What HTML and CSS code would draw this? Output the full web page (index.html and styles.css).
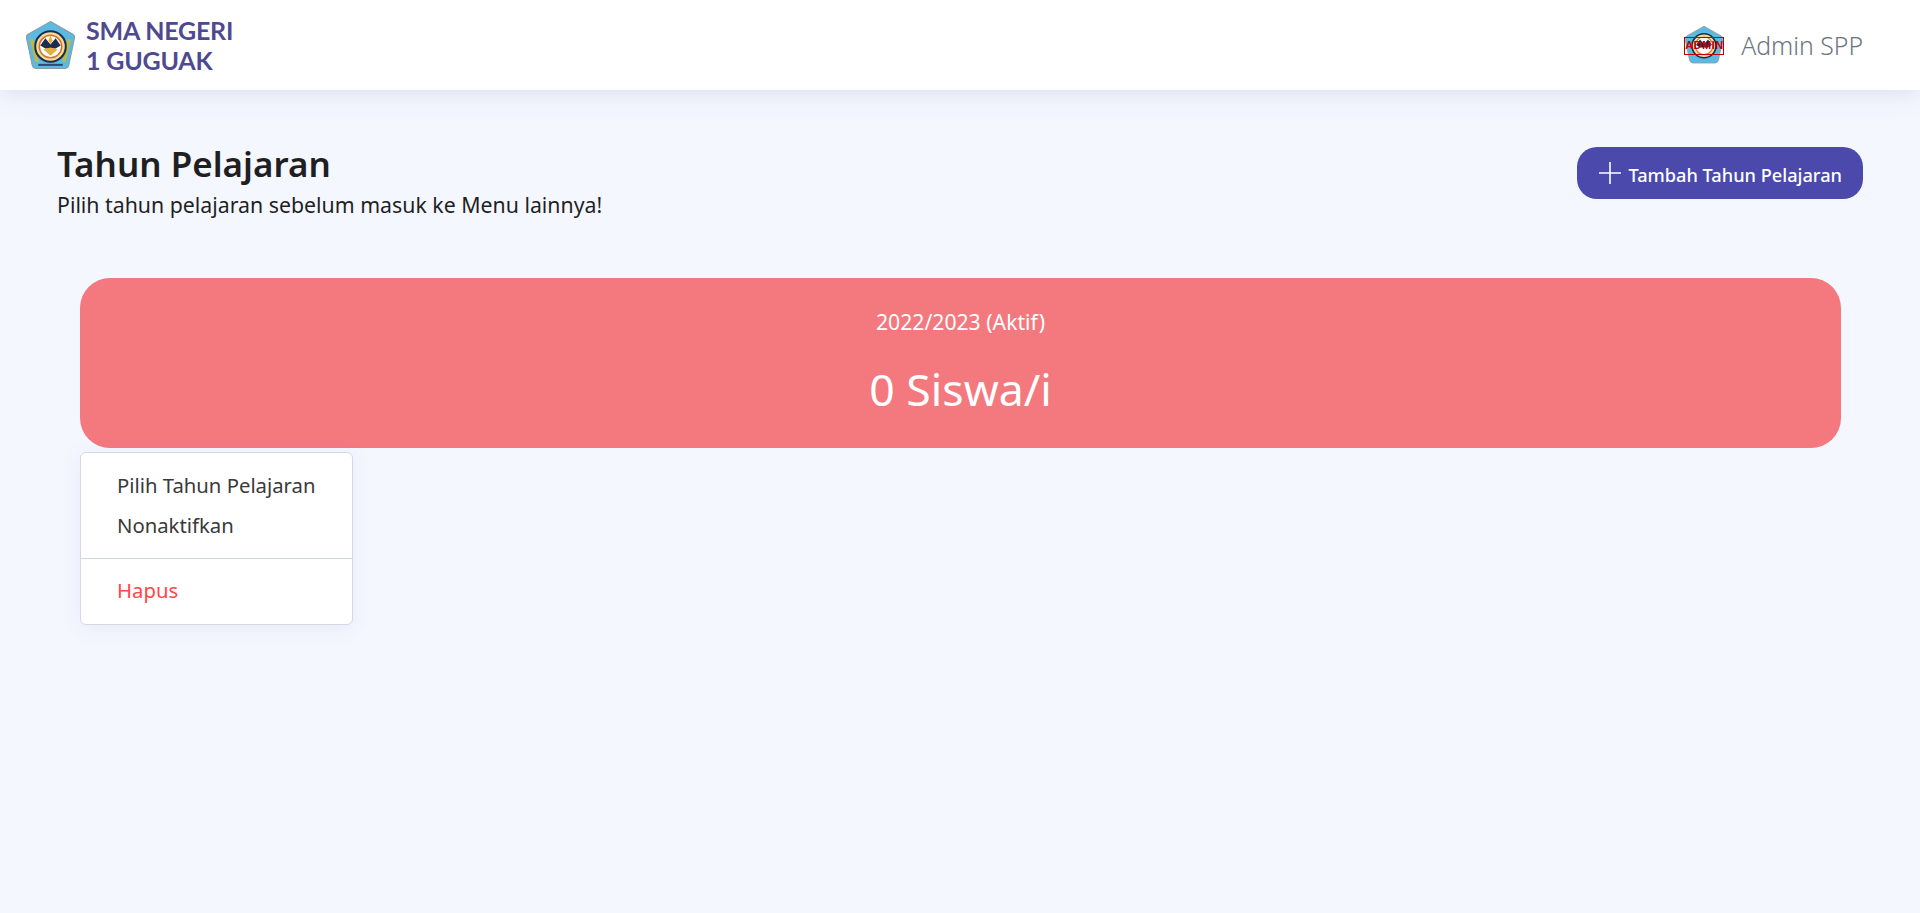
FILE: index.html
```html
<!DOCTYPE html>
<html lang="en">
<head>
    <meta charset="UTF-8">
    <meta name="viewport" content="width=device-width, initial-scale=1.0">
    <title>Tahun Pelajaran</title>
    <link rel="stylesheet" href="styles.css">
</head>
<body>
    <!-- Navbar -->
    <header class="navbar">
        <div class="brand">
            <svg class="brand-logo" viewBox="0 0 50 50">
                <path d="M25 1.5 L47 14 Q49 15 48.5 18 L43 44 Q42.5 47 39 47.5 L11 47.5 Q7.5 47 7 44 L1.5 18 Q1 15 3 14 Z" fill="#5cb9e2" stroke="#8f9a9c" stroke-width="1"/>
                <path d="M6.5 19 L12 41 M43.5 19 L38 41" stroke="#b9bb45" stroke-width="3.5" fill="none"/>
                <path d="M13 44 L37 44" stroke="#2c4a6e" stroke-width="2" fill="none"/>
                <circle cx="25" cy="26" r="15" fill="#f1dc9c" stroke="#1f2d4d" stroke-width="2"/>
                <circle cx="25" cy="26" r="11" fill="#ffffff" stroke="#d8722e" stroke-width="1.5"/>
                <path d="M15 25 L20 18 L25 24 L30 18 L35 25 L30 28 L20 28 Z" fill="#1f2d4d"/>
                <path d="M25 15 L27 20 L25 24 L23 20 Z" fill="#e3b23c"/>
                <path d="M18 29 L25 35 L32 29 L25 27 Z" fill="#e3b23c"/>
            </svg>
            <div class="brand-name">SMA NEGERI<br>1 GUGUAK</div>
        </div>
        <div class="user">
            <div class="user-avatar">
                <svg viewBox="0 0 50 50">
                    <path d="M25 1.5 L47 14 Q49 15 48.5 18 L43 44 Q42.5 47 39 47.5 L11 47.5 Q7.5 47 7 44 L1.5 18 Q1 15 3 14 Z" fill="#5cb9e2" stroke="#8f9a9c" stroke-width="1"/>
                    <circle cx="25" cy="26" r="15" fill="#f1dc9c" stroke="#1f2d4d" stroke-width="2"/>
                    <circle cx="25" cy="26" r="11" fill="#ffffff" stroke="#d8722e" stroke-width="1.5"/>
                    <path d="M15 25 L20 18 L25 24 L30 18 L35 25 L30 28 L20 28 Z" fill="#1f2d4d"/>
                </svg>
                <span class="user-stamp">ADMIN</span>
            </div>
            <span class="user-name">Admin SPP</span>
        </div>
    </header>

    <main class="content">
        <div class="page-head">
            <div>
                <h1>Tahun Pelajaran</h1>
                <p>Pilih tahun pelajaran sebelum masuk ke Menu lainnya!</p>
            </div>
            <button class="btn-add">
                <svg viewBox="0 0 24 24"><path d="M12 1v22M1 12h22" stroke="#fff" stroke-width="1.6" fill="none"/></svg>
                Tambah Tahun Pelajaran
            </button>
        </div>

        <section class="year-list">
            <div class="year-card">
                <div class="year-label">2022/2023 (Aktif)</div>
                <div class="year-count">0 Siswa/i</div>
            </div>
            <div class="dropdown">
                <a class="dropdown-item">Pilih Tahun Pelajaran</a>
                <a class="dropdown-item">Nonaktifkan</a>
                <div class="dropdown-divider"></div>
                <a class="dropdown-item danger">Hapus</a>
            </div>
        </section>
    </main>
</body>
</html>
```

FILE: styles.css
```css
* {
    box-sizing: border-box;
}
body {
    font-family: 'Noto Sans', 'Open Sans', sans-serif;
    margin: 0;
    min-height: 100vh;
    background-color: #f5f7ff;
    color: #1f1f1f;
    overflow: hidden;
}

/* Navbar */
.navbar {
    height: 90px;
    background-color: #fff;
    box-shadow: 0 4px 24px rgba(80, 80, 160, 0.14);
    display: flex;
    align-items: center;
    justify-content: space-between;
    padding: 0 57px 0 25px;
}
.brand {
    display: flex;
    align-items: center;
    gap: 10px;
}
.brand-logo {
    width: 51px;
    height: 51px;
}
.brand-name {
    font-family: 'Lato', sans-serif;
    font-weight: 700;
    font-size: 25px;
    line-height: 30px;
    letter-spacing: -0.2px;
    color: #4f4a8f;
}
.user {
    display: flex;
    align-items: center;
    gap: 17px;
}
.user-avatar {
    position: relative;
    width: 40px;
    height: 42px;
}
.user-avatar svg {
    width: 100%;
    height: 100%;
    display: block;
}
.user-stamp {
    position: absolute;
    left: 0;
    right: 0;
    top: 13px;
    height: 18px;
    border: 1.5px solid #c00000;
    color: #c00000;
    font-family: 'Liberation Sans', sans-serif;
    font-size: 11px;
    font-weight: 700;
    line-height: 15px;
    letter-spacing: 0.5px;
    text-align: center;
}
.user-name {
    font-size: 24.8px;
    font-weight: 300;
    color: #6c757d;
}

/* Page */
.content {
    padding: 53px 57px 0;
}
.page-head {
    display: flex;
    align-items: flex-start;
    justify-content: space-between;
}
h1 {
    font-size: 35px;
    font-weight: 600;
    line-height: 42px;
    margin: 0;
}
.page-head p {
    font-size: 21.3px;
    line-height: 28px;
    margin: 6px 0 0;
}
.btn-add {
    display: flex;
    align-items: center;
    gap: 6px;
    height: 52px;
    margin-top: 4px;
    padding: 4px 21px 0;
    border: none;
    border-radius: 20px;
    background-color: #4b49ac;
    color: #fff;
    font-family: inherit;
    font-size: 18.2px;
    font-weight: 500;
}
.btn-add svg {
    width: 24px;
    height: 24px;
    margin-top: -4px;
}

/* Year card */
.year-list {
    margin: 59px 22px 0 23px;
}
.year-card {
    height: 170px;
    border-radius: 30px;
    background-color: #f3797e;
    color: #fff;
    text-align: center;
    padding-top: 30px;
}
.year-label {
    font-size: 21.2px;
    line-height: 28px;
}
.year-count {
    font-size: 44.6px;
    line-height: 60px;
    margin-top: 23px;
}

/* Dropdown */
.dropdown {
    width: 273px;
    margin-top: 4px;
    padding: 12px 0 14px;
    background-color: #fff;
    border: 1px solid #d5d8e4;
    border-radius: 6px;
    box-shadow: 0 4px 20px rgba(80, 80, 160, 0.08);
}
.dropdown-item {
    display: block;
    padding: 4px 36px;
    font-size: 20.3px;
    line-height: 32px;
    color: #3a3a3a;
}
.dropdown-item.danger {
    color: #ff4747;
}
.dropdown-divider {
    height: 1px;
    margin: 13px 0 11px;
    background-color: #ced4e0;
}
```
